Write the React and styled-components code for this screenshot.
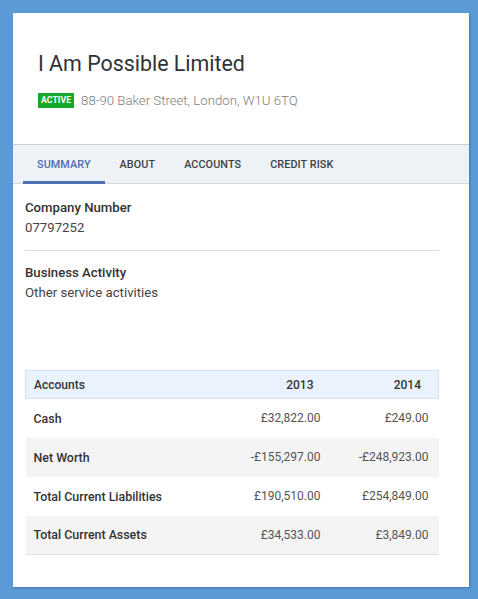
import React from "react";
import styled, { createGlobalStyle } from "styled-components";

const Global = createGlobalStyle`
  html, body {
    margin: 0;
    padding: 0;
    background: #5b9bd5;
  }
  body {
    font-family: Roboto, "Liberation Sans", Arial, sans-serif;
  }
`;

const Frame = styled.div`
  padding: 13px 9px 12px 13px;
  box-sizing: border-box;
  width: 478px;
  height: 599px;
`;

const Card = styled.div`
  background: #ffffff;
  width: 456px;
  height: 574px;
  box-shadow: 1px 1px 2px rgba(40, 80, 140, 0.5);
`;

const Header = styled.div`
  height: 131px;
  box-sizing: border-box;
  padding: 38px 0 0 25px;
`;

const Title = styled.h1`
  margin: 0;
  font-size: 21.4px;
  font-weight: 400;
  line-height: 26px;
  color: #2f3337;
`;

const Meta = styled.div`
  display: flex;
  align-items: center;
  gap: 7px;
  margin-top: 16px;
`;

const Badge = styled.span`
  background: #16a82a;
  color: #ffffff;
  font-size: 8.6px;
  font-weight: 700;
  line-height: 15px;
  padding: 0 3px;
  border-radius: 1px;
  letter-spacing: 0.1px;
`;

const Address = styled.span`
  font-size: 13.2px;
  font-weight: 300;
  color: #7e7e7e;
`;

const Tabs = styled.nav`
  display: flex;
  height: 40px;
  box-sizing: border-box;
  background: #eef1f5;
  border-top: 1px solid #c9ced4;
  border-bottom: 1px solid #d6dadf;
  padding-left: 9.5px;
`;

const Tab = styled.div`
  display: flex;
  align-items: center;
  padding: 0 14.5px;
  font-size: 10.8px;
  font-weight: 500;
  color: ${(p) => (p.$active ? "#4b6fb0" : "#3d4146")};
  letter-spacing: 0.1px;
  box-shadow: ${(p) => (p.$active ? "inset 0 -3px 0 #4b6fb0" : "none")};
  margin-bottom: -1px;
`;

const Content = styled.div`
  padding: 14px 30px 0 12px;
`;

const Field = styled.div`
  padding: ${(p) => (p.$first ? "0 0 12px" : "12px 0 0")};
  border-bottom: ${(p) => (p.$first ? "1px solid #dcdcdc" : "none")};
`;

const Label = styled.div`
  font-size: 13.2px;
  font-weight: 500;
  color: #333333;
  line-height: 20px;
`;

const Value = styled.div`
  font-size: 13.2px;
  font-weight: 400;
  color: #444444;
  line-height: 20px;
`;

const Table = styled.table`
  margin-top: 67px;
  width: 414px;
  border-collapse: collapse;
  table-layout: fixed;
  font-size: 12px;
`;

const HeadRow = styled.tr`
  background: #eaf3fd;
  border: 1px solid #d3dfec;
  height: 28px;
`;

const Th = styled.th`
  font-weight: 500;
  color: #333333;
  text-align: ${(p) => (p.$right ? "right" : "left")};
  padding: ${(p) => (p.$right ? "0 17px 0 0" : "0 0 0 8px")};
`;

const Row = styled.tr`
  height: 39px;
  background: ${(p) => (p.$shade ? "#f4f4f4" : "#ffffff")};
  border-bottom: ${(p) => (p.$last ? "1px solid #dedede" : "none")};
`;

const Td = styled.td`
  color: ${(p) => (p.$right ? "#555555" : "#333333")};
  font-size: ${(p) => (p.$right ? "12px" : "12.4px")};
  font-weight: ${(p) => (p.$right ? 400 : 500)};
  text-align: ${(p) => (p.$right ? "right" : "left")};
  padding: ${(p) => (p.$right ? "0 10px 0 0" : "0 0 0 8px")};
`;

const rows = [
  ["Cash", "£32,822.00", "£249.00"],
  ["Net Worth", "-£155,297.00", "-£248,923.00"],
  ["Total Current Liabilities", "£190,510.00", "£254,849.00"],
  ["Total Current Assets", "£34,533.00", "£3,849.00"],
];

export default function App() {
  return (
    <>
      <Global />
      <Frame>
        <Card>
          <Header>
            <Title>I Am Possible Limited</Title>
            <Meta>
              <Badge>ACTIVE</Badge>
              <Address>88-90 Baker Street, London, W1U 6TQ</Address>
            </Meta>
          </Header>
          <Tabs>
            <Tab $active>SUMMARY</Tab>
            <Tab>ABOUT</Tab>
            <Tab>ACCOUNTS</Tab>
            <Tab>CREDIT RISK</Tab>
          </Tabs>
          <Content>
            <Field $first>
              <Label>Company Number</Label>
              <Value>07797252</Value>
            </Field>
            <Field>
              <Label>Business Activity</Label>
              <Value>Other service activities</Value>
            </Field>
            <Table>
              <colgroup>
                <col />
                <col style={{ width: 112 }} />
                <col style={{ width: 108 }} />
              </colgroup>
              <thead>
                <HeadRow>
                  <Th>Accounts</Th>
                  <Th $right>2013</Th>
                  <Th $right>2014</Th>
                </HeadRow>
              </thead>
              <tbody>
                {rows.map((r, i) => (
                  <Row key={r[0]} $shade={i % 2 === 1} $last={i === rows.length - 1}>
                    <Td>{r[0]}</Td>
                    <Td $right>{r[1]}</Td>
                    <Td $right>{r[2]}</Td>
                  </Row>
                ))}
              </tbody>
            </Table>
          </Content>
        </Card>
      </Frame>
    </>
  );
}
